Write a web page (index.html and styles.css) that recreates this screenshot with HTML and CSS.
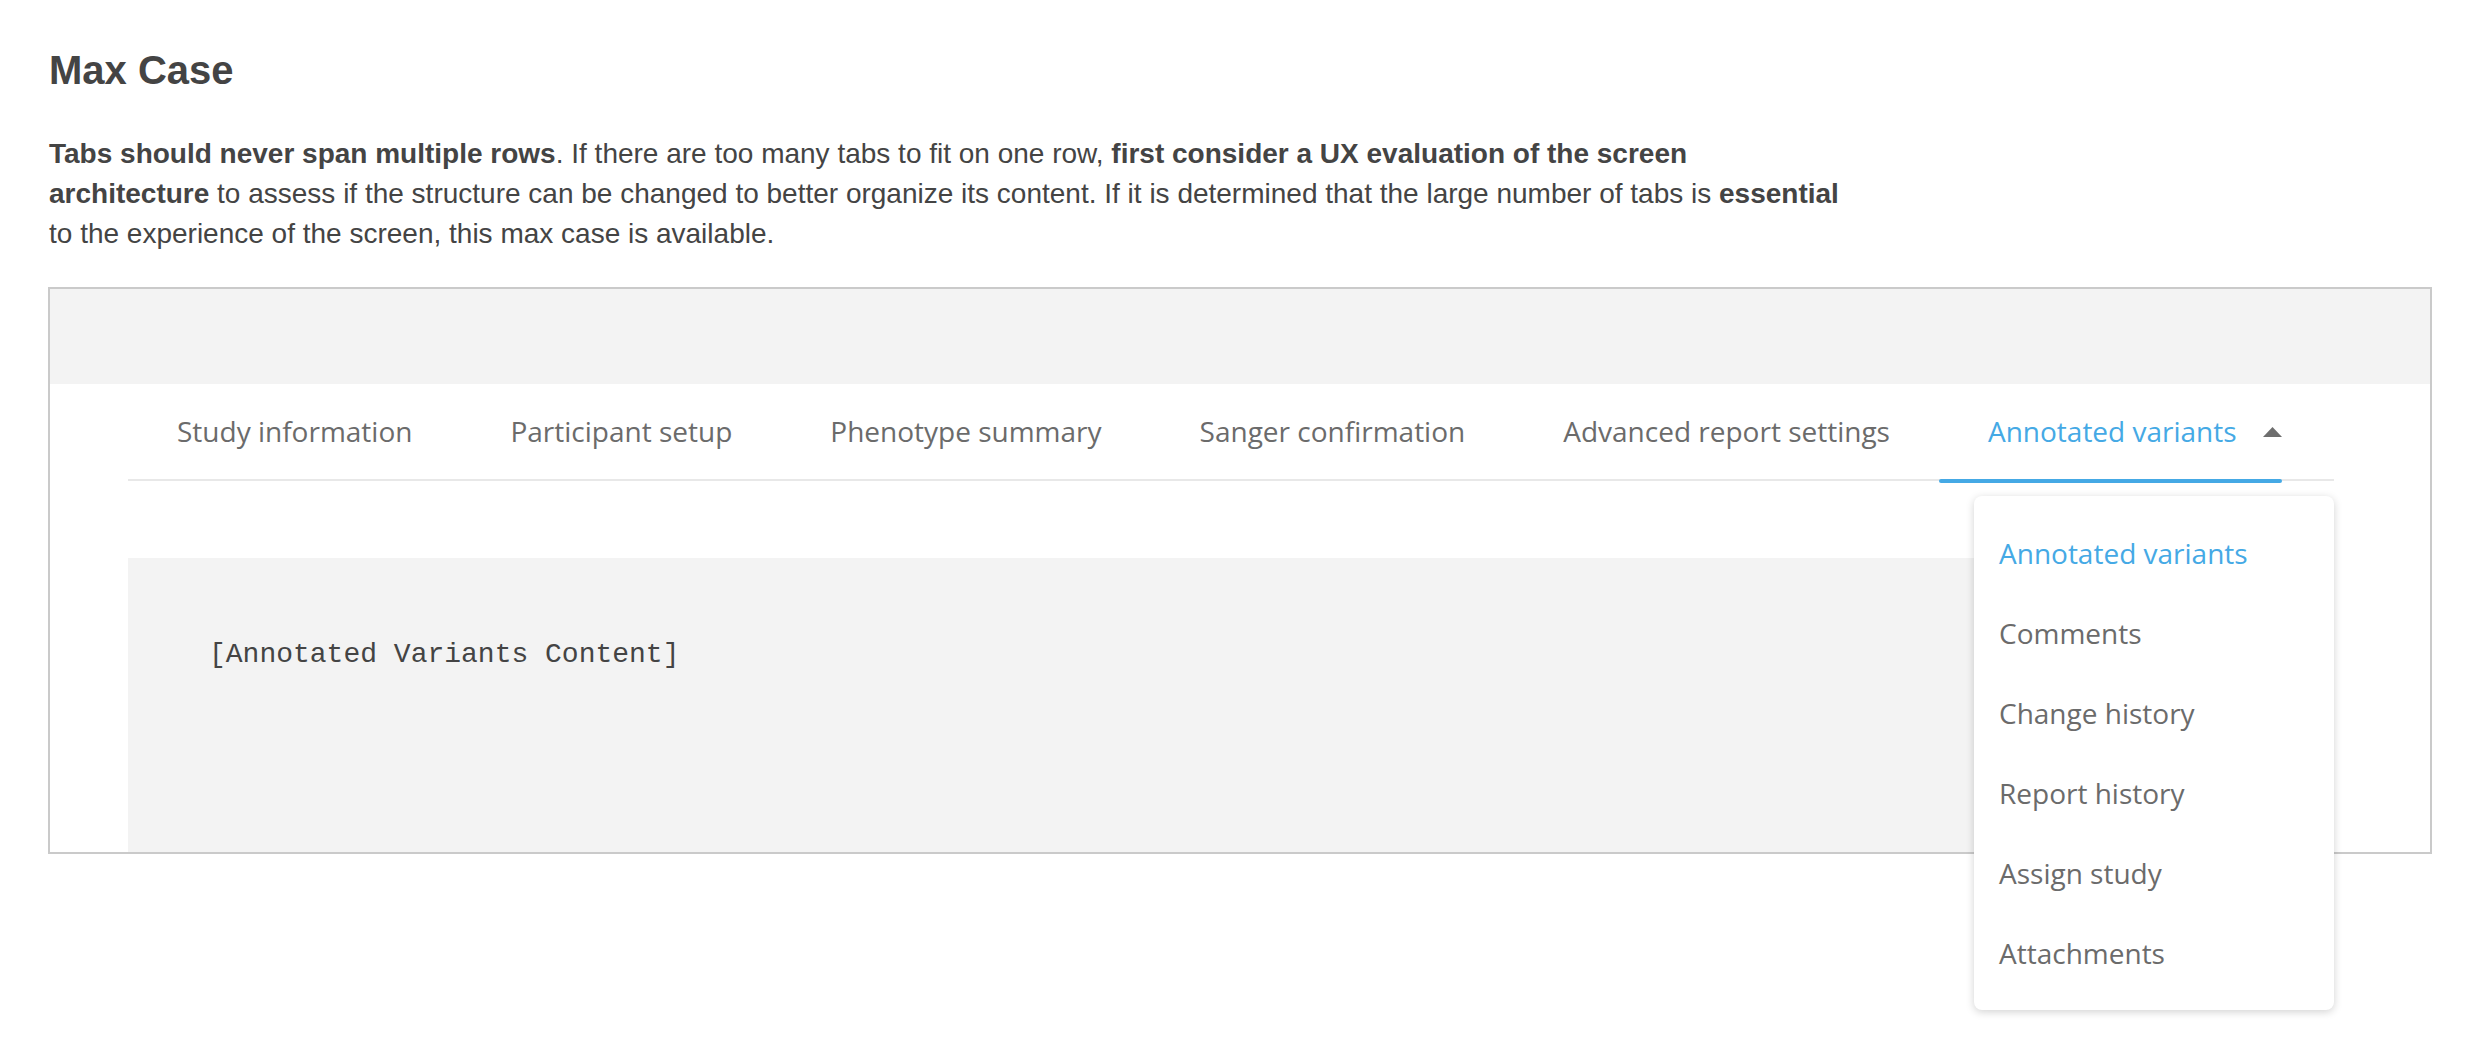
FILE: index.html
```html
<!DOCTYPE html>
<html>
<head>
<meta charset="utf-8">
<link rel="stylesheet" href="styles.css">
</head>
<body>
<div class="page">
  <h1 class="title">Max Case</h1>
  <p class="desc"><b>Tabs should never span multiple rows</b>. If there are too many tabs to fit on one row, <b>first consider a UX evaluation of the screen</b><br><b>architecture</b> to assess if the structure can be changed to better organize its content. If it is determined that the large number of tabs is <b>essential</b><br>to the experience of the screen, this max case is available.</p>
  <div class="demo">
    <div class="band"></div>
    <div class="demo-body">
      <div class="tabbar">
        <div class="tab">Study information</div>
        <div class="tab">Participant setup</div>
        <div class="tab">Phenotype summary</div>
        <div class="tab">Sanger confirmation</div>
        <div class="tab">Advanced report settings</div>
        <div class="tab tab-active">
          <span>Annotated variants</span>
          <svg class="caret" width="19" height="10" viewBox="0 0 19 10"><path d="M0 10 L9.5 0 L19 10 Z" fill="#6e6e6e"/></svg>
        </div>
        <div class="menu">
          <div class="menu-item menu-item-active">Annotated variants</div>
          <div class="menu-item">Comments</div>
          <div class="menu-item">Change history</div>
          <div class="menu-item">Report history</div>
          <div class="menu-item">Assign study</div>
          <div class="menu-item">Attachments</div>
        </div>
      </div>
      <div class="content">[Annotated Variants Content]</div>
    </div>
  </div>
</div>
</body>
</html>
```
FILE: styles.css
```css
html, body {
  margin: 0;
  padding: 0;
  background: #fff;
}
body {
  min-height: 1062px;
}
.page {
  padding: 0 52px 0 48px;
  min-height: 1062px;
  box-sizing: border-box;
  font-family: "Liberation Sans", Arial, Helvetica, sans-serif;
  color: #444;
}
.title {
  margin: 46px 0 0 1px;
  font-size: 40px;
  line-height: 48px;
  font-weight: bold;
  color: #444;
}
.desc {
  margin: 40px 0 0 1px;
  font-size: 28px;
  line-height: 40px;
  color: #444;
  white-space: nowrap;
}
.desc b {
  font-weight: bold;
}
.demo {
  margin-top: 33px;
  border: 2px solid #cacaca;
  height: 567px;
  box-sizing: border-box;
  display: flex;
  flex-direction: column;
}
.band {
  height: 95px;
  background: #f3f3f3;
  flex: none;
}
.demo-body {
  flex: 1;
  display: flex;
  flex-direction: column;
  padding: 0 96px 0 78px;
}
.tabbar {
  position: relative;
  z-index: 2;
  display: flex;
  align-items: stretch;
  height: 97px;
  border-bottom: 2px solid #e8e8e8;
  box-sizing: border-box;
  font-family: "Open Sans", sans-serif;
  font-size: 28px;
  color: #6b6b6b;
}
.tab {
  display: flex;
  align-items: center;
  padding: 0 49px 2px;
  white-space: nowrap;
  position: relative;
}
.tab-active {
  color: #45a9e5;
  padding-right: 0;
}
.tab-active::after {
  content: "";
  position: absolute;
  left: 0;
  right: 0;
  bottom: -4px;
  height: 4px;
  border-radius: 2px;
  background: #45a9e5;
}
.caret {
  margin-left: 26px;
  margin-top: 2px;
  display: block;
}
.menu {
  position: absolute;
  right: 0;
  top: 112px;
  width: 360px;
  padding: 17px 0;
  background: #fff;
  border-radius: 8px;
  box-shadow: 0 2px 8px rgba(0, 0, 0, 0.18);
}
.menu-item {
  height: 80px;
  display: flex;
  align-items: center;
  padding-left: 25px;
  color: #6b6b6b;
}
.menu-item-active {
  color: #45a9e5;
}
.content {
  margin-top: 77px;
  flex: 1;
  background: #f3f3f3;
  padding: 81px 80px 0 81px;
  font-family: "Liberation Mono", "Courier New", monospace;
  font-size: 28px;
  line-height: 32px;
  color: #444;
}
```
